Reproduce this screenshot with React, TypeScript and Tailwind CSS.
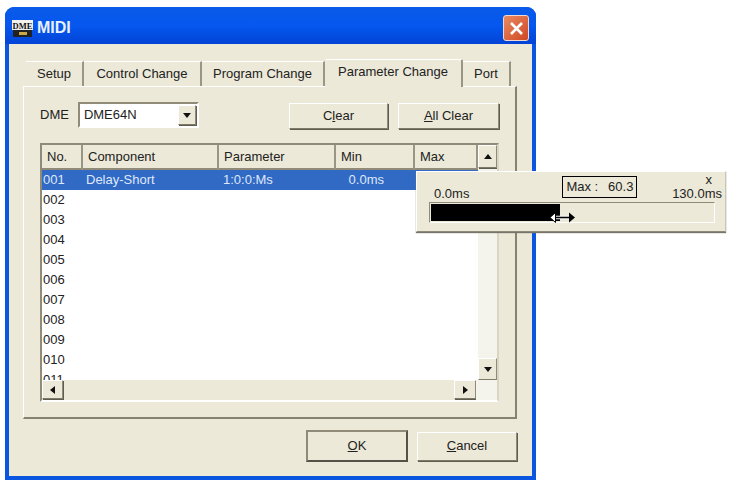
const font = { fontFamily: "'Liberation Sans', Arial, sans-serif" };

const raised =
  "border border-t-white border-l-white border-r-[#8f8b78] border-b-[#7d7a68] shadow-[1px_1px_0_#5f5d50]";

const columns = [
  { label: "No.", width: "w-[41px]" },
  { label: "Component", width: "w-[136px]" },
  { label: "Parameter", width: "w-[117px]" },
  { label: "Min", width: "w-[79px]" },
  { label: "Max", width: "w-[63px]" },
];

const rows = ["001", "002", "003", "004", "005", "006", "007", "008", "009", "010", "011"];

const tabs = [
  { label: "Setup", width: "w-[58px]" },
  { label: "Control Change", width: "w-[118px]" },
  { label: "Program Change", width: "w-[123px]" },
];

const Arrow = ({ dir }: { dir: "up" | "down" | "left" | "right" }) => {
  const points = {
    up: "1,7 5,2 9,7",
    down: "1,3 9,3 5,8",
    left: "7,1 7,9 2,5",
    right: "3,1 3,9 8,5",
  }[dir];
  return (
    <svg width="10" height="10" viewBox="0 0 10 10">
      <polygon points={points} fill="#111" />
    </svg>
  );
};

const ScrollButton = ({ dir, className }: { dir: "up" | "down" | "left" | "right"; className: string }) => (
  <div className={`flex items-center justify-center bg-[#ece9d8] ${raised} ${className}`}>
    <Arrow dir={dir} />
  </div>
);

const Button = ({ children, className }: { children: React.ReactNode; className: string }) => (
  <div className={`flex items-center justify-center bg-[#ece9d8] text-[13px] text-[#222] ${className}`}>
    {children}
  </div>
);

export default function App() {
  return (
    <div className="relative h-[484px] w-[732px] overflow-hidden bg-white pl-[5px] pt-[7px]" style={font}>
      {/* dialog */}
      <div className="flex h-[473px] w-[531px] flex-col overflow-hidden rounded-t-[9px] bg-[#0a56e0] px-[4px] pb-[4px]">
        <div className="-mx-[4px] flex h-[37px] shrink-0 items-center bg-gradient-to-b from-[#0a5be8] via-[#0557ef] to-[#0344d6] pl-[7px] pr-[7px] pt-[5px]">
          <svg width="21" height="17" viewBox="0 0 21 17">
            <rect x="0" y="0" width="21" height="10" fill="#f2f2ee" />
            <rect x="1" y="10" width="19" height="7" fill="#222" />
            <rect x="7" y="12" width="8" height="3" fill="#c9a94a" />
            <text x="10.5" y="8.5" textAnchor="middle" fontSize="8.5" fontWeight="700" fill="#111" fontFamily="'Liberation Serif', serif">
              DME
            </text>
          </svg>
          <span className="ml-[4px] text-[16px] font-bold text-[#e8f0ff]">MIDI</span>
          <div className="ml-auto flex h-[26px] w-[26px] items-center justify-center rounded-[3px] border border-[#f3d8cc] bg-gradient-to-br from-[#e98a62] to-[#cf4520]">
            <svg width="15" height="15" viewBox="0 0 15 15">
              <path d="M2 2 L13 13 M13 2 L2 13" stroke="#fff" strokeWidth="2.6" />
            </svg>
          </div>
        </div>

        <div className="flex flex-1 flex-col bg-[#ece9d8] pl-[14px] pr-[15px] pt-[15px] text-[13px] text-[#222]">
          {/* tabs */}
          <div className="relative z-10 flex h-[27px] items-end pl-[3px]">
            {tabs.map((tab) => (
              <div
                key={tab.label}
                className={`flex h-[25px] items-center justify-center border-r-2 border-t border-r-[#9a9684] border-t-white bg-[#ece9d8] ${tab.width}`}
              >
                {tab.label}
              </div>
            ))}
            <div className="-mb-[1px] flex h-[28px] w-[138px] items-center justify-center rounded-t-[2px] border-r-2 border-t border-r-[#9a9684] border-t-white bg-[#ece9d8] pb-[3px]">
              Parameter Change
            </div>
            <div className="flex h-[25px] w-[48px] items-center justify-center border-r-2 border-t border-r-[#9a9684] border-t-white bg-[#ece9d8]">
              Port
            </div>
          </div>

          {/* panel */}
          <div className="flex h-[333px] w-[494px] flex-col border border-b-2 border-r-2 border-b-[#85826f] border-l-white border-r-[#85826f] border-t-white pl-[16px] pr-[16px]">
            <div className="flex h-[56px] items-center">
              <span className="mr-[9px]">DME</span>
              <div className="flex h-[26px] w-[121px] items-center border-2 border-b-white border-l-[#8f8b78] border-r-white border-t-[#8f8b78] bg-white pl-[4px] pr-[1px]">
                <span>DME64N</span>
                <div className={`ml-auto flex h-[20px] w-[18px] items-center justify-center bg-[#ece9d8] ${raised}`}>
                  <Arrow dir="down" />
                </div>
              </div>
              <Button className={`ml-auto mr-[10px] mt-[2px] h-[26px] w-[99px] ${raised}`}>
                <span>
                  C<u>l</u>ear
                </span>
              </Button>
              <Button className={`mt-[2px] h-[26px] w-[101px] ${raised}`}>
                <span>
                  <u>A</u>ll Clear
                </span>
              </Button>
            </div>

            {/* list */}
            <div className="flex h-[259px] w-[459px] flex-col border-2 border-b-white border-l-[#8f8b78] border-r-[#d8d5c4] border-t-[#8f8b78] bg-white">
              <div className="flex h-[237px] overflow-hidden">
                <div className="flex w-[436px] flex-col">
                  <div className="flex h-[25px] shrink-0 bg-[#ece9d8]">
                    {columns.map((col) => (
                      <div
                        key={col.label}
                        className={`flex items-center border-b-2 border-r-2 border-b-[#8f8b78] border-r-[#9a9684] pl-[5px] ${col.width}`}
                      >
                        {col.label}
                      </div>
                    ))}
                  </div>
                  {rows.map((no, i) => (
                    <div
                      key={no}
                      className={`flex h-[20px] shrink-0 items-center ${i === 0 ? "bg-[#316ac5] text-[#dfe8f8]" : ""}`}
                    >
                      <span className="w-[41px] pl-[1px]">{no}</span>
                      {i === 0 && (
                        <>
                          <span className="w-[136px] pl-[3px]">Delay-Short</span>
                          <span className="w-[117px] pl-[4px]">1:0:0:Ms</span>
                          <span className="w-[48px] text-right">0.0ms</span>
                        </>
                      )}
                    </div>
                  ))}
                </div>
                <div className="flex w-[21px] flex-col bg-[#f5f4ec]">
                  <ScrollButton dir="up" className="h-[23px] shrink-0" />
                  <ScrollButton dir="down" className="mt-auto h-[22px] shrink-0" />
                </div>
              </div>
              <div className="flex h-[20px] shrink-0 bg-[#ece9d8]">
                <ScrollButton dir="left" className="h-[19px] w-[21px]" />
                <div className="flex-1" />
                <ScrollButton dir="right" className="h-[19px] w-[22px]" />
                <div className="w-[21px] bg-[#f5f4ec]" />
              </div>
            </div>
          </div>

          {/* footer */}
          <div className="mt-[11px] flex items-center justify-end gap-[9px]">
            <Button className="h-[32px] w-[102px] border-2 border-b-[#555347] border-l-[#8f8b78] border-r-[#555347] border-t-[#8f8b78]">
              <span>
                <u>O</u>K
              </span>
            </Button>
            <Button className={`h-[29px] w-[100px] ${raised}`}>
              <span>
                <u>C</u>ancel
              </span>
            </Button>
          </div>
        </div>
      </div>

      {/* range popup */}
      <div className="absolute left-[416px] top-[171px] flex h-[61px] w-[310px] flex-col border border-b-[#8f8b78] border-l-white border-r-[#c9c6b4] border-t-white bg-[#ece9d8] px-[12px] text-[13px] text-[#222] shadow-[0_1px_1px_#77756a]">
        <div className="flex h-[30px] shrink-0 items-end">
          <span className="mb-[1px] pl-[5px] leading-[15px]">0.0ms</span>
          <div className="mb-[4px] ml-[93px] mr-auto flex h-[22px] w-[75px] items-center justify-between border border-black px-[3px]">
            <span>Max :</span>
            <span>60.3</span>
          </div>
          <div className="-mr-[9px] mb-[1px] flex flex-col items-end leading-[14px]">
            <span className="pr-[10px]">x</span>
            <span>130.0ms</span>
          </div>
        </div>
        <div className="flex h-[21px] w-[286px] shrink-0 items-center border border-b-white border-l-[#8f8b78] border-r-white border-t-[#8f8b78] px-[1px]">
          <div className="h-[17px] w-[129px] bg-black" />
        </div>
      </div>

      {/* resize cursor */}
      <svg className="absolute left-[549px] top-[211px]" width="27" height="13" viewBox="0 0 27 13">
        <path d="M5 6.5h16" stroke="#fff" strokeWidth="3.5" />
        <path d="M5 6.5h16" stroke="#000" strokeWidth="1.6" />
        <polygon points="1,6.5 6.5,1.5 6.5,11.5" fill="#fff" stroke="#000" />
        <polygon points="26,6.5 20,1.5 20,11.5" fill="#000" />
      </svg>
    </div>
  );
}
